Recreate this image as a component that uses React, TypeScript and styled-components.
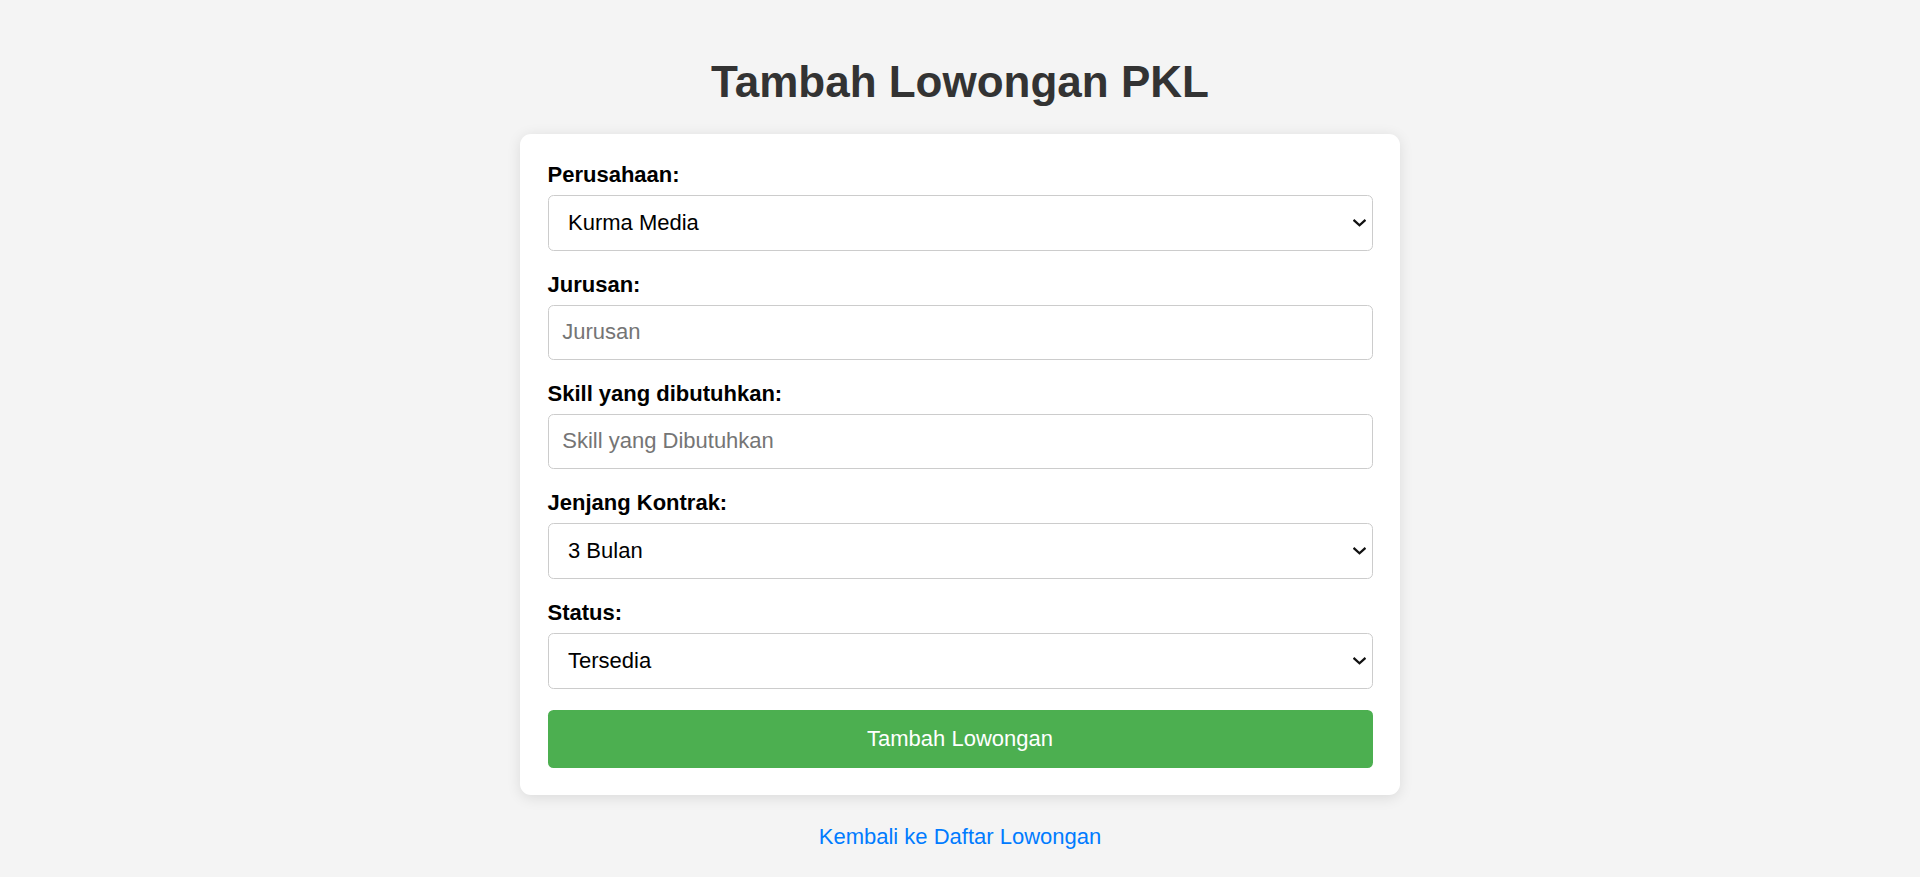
import React from "react";
import styled, { createGlobalStyle } from "styled-components";

const GlobalStyle = createGlobalStyle`
  body {
    margin: 0;
    background: #f4f4f4;
    font-family: "Liberation Sans", Arial, sans-serif;
  }
`;

type Option = { value: string; label: string };

function Dropdown({ id, options }: { id: string; options: Option[] }) {
  return (
    <SelectWrap>
      <Select id={id} defaultValue={options[0].value}>
        {options.map((o) => (
          <option key={o.value} value={o.value}>
            {o.label}
          </option>
        ))}
      </Select>
      <Chevron viewBox="0 0 14 8" aria-hidden="true">
        <path d="M1.5 1.5 L7 6.5 L12.5 1.5" />
      </Chevron>
    </SelectWrap>
  );
}

function TambahLowongan() {
  return (
    <Page>
      <GlobalStyle />
      <Title>Tambah Lowongan PKL</Title>
      <Card onSubmit={(e) => e.preventDefault()}>
        <Field>
          <Label htmlFor="perusahaan">Perusahaan:</Label>
          <Dropdown
            id="perusahaan"
            options={[{ value: "kurma", label: "Kurma Media" }]}
          />
        </Field>
        <Field>
          <Label htmlFor="jurusan">Jurusan:</Label>
          <Input id="jurusan" type="text" placeholder="Jurusan" />
        </Field>
        <Field>
          <Label htmlFor="skill">Skill yang dibutuhkan:</Label>
          <Input id="skill" type="text" placeholder="Skill yang Dibutuhkan" />
        </Field>
        <Field>
          <Label htmlFor="kontrak">Jenjang Kontrak:</Label>
          <Dropdown
            id="kontrak"
            options={[
              { value: "3", label: "3 Bulan" },
              { value: "6", label: "6 Bulan" },
            ]}
          />
        </Field>
        <Field>
          <Label htmlFor="status">Status:</Label>
          <Dropdown
            id="status"
            options={[
              { value: "tersedia", label: "Tersedia" },
              { value: "penuh", label: "Tidak Tersedia" },
            ]}
          />
        </Field>
        <SubmitButton type="submit">Tambah Lowongan</SubmitButton>
      </Card>
      <BackRow>
        <BackLink href="#">Kembali ke Daftar Lowongan</BackLink>
      </BackRow>
    </Page>
  );
}

const Page = styled.div`
  padding: 27.5px 0;
  display: flex;
  flex-direction: column;
  align-items: center;
`;

const Title = styled.h1`
  margin: 29.5px 0 27px;
  font-size: 44px;
  font-weight: bold;
  color: #333;
  text-align: center;
`;

const Card = styled.form`
  box-sizing: border-box;
  width: 880px;
  padding: 27.5px;
  background: #fff;
  border-radius: 11px;
  box-shadow: 0 2.75px 13.75px rgba(0, 0, 0, 0.1);
`;

const Field = styled.div`
  margin-bottom: 21px;
`;

const Label = styled.label`
  display: block;
  margin-bottom: 7px;
  font-size: 22px;
  font-weight: bold;
  color: #000;
`;

const Input = styled.input`
  box-sizing: border-box;
  width: 100%;
  height: 55px;
  padding: 0 13.75px;
  border: 1px solid #ccc;
  border-radius: 5.5px;
  font-family: "Liberation Sans", Arial, sans-serif;
  font-size: 22px;
  color: #000;
  background: #fff;
  outline: none;

  &::placeholder {
    color: #757575;
  }
`;

const SelectWrap = styled.div`
  position: relative;
`;

const Select = styled.select`
  box-sizing: border-box;
  display: block;
  width: 100%;
  height: 56px;
  padding: 0 40px 0 19.5px;
  border: 1px solid #ccc;
  border-radius: 5.5px;
  appearance: none;
  font-family: "Liberation Sans", Arial, sans-serif;
  font-size: 22px;
  color: #000;
  background: #fff;
  outline: none;
`;

const Chevron = styled.svg`
  position: absolute;
  right: 7px;
  top: 50%;
  width: 13px;
  height: 8px;
  margin-top: -4px;
  pointer-events: none;
  fill: none;
  stroke: #111;
  stroke-width: 2.4;
  stroke-linecap: square;
`;

const SubmitButton = styled.button`
  display: block;
  width: 100%;
  height: 58px;
  border: none;
  border-radius: 5.5px;
  background: #4caf50;
  color: #fff;
  font-family: "Liberation Sans", Arial, sans-serif;
  font-size: 22px;
  cursor: pointer;
`;

const BackRow = styled.div`
  margin-top: 29px;
  text-align: center;
`;

const BackLink = styled.a`
  font-size: 22px;
  color: #007bff;
  text-decoration: none;
`;

export default TambahLowongan;
